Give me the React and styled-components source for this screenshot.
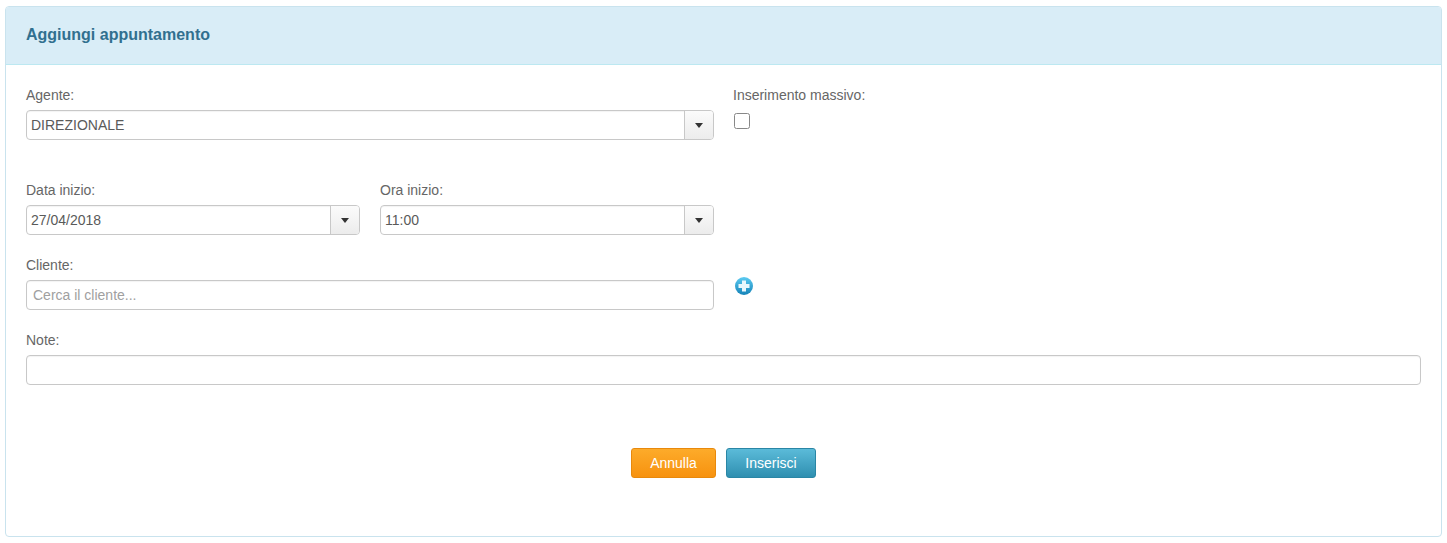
import React from "react";
import styled, { createGlobalStyle } from "styled-components";

const Global = createGlobalStyle`
  html, body { margin: 0; padding: 0; background: #fff; }
  body { font-family: "Liberation Sans", Arial, sans-serif; font-size: 14px; color: #555; }
  * { box-sizing: border-box; }
`;

const Page = styled.div`
  padding: 6px 5px 6px 5px;
`;
const Panel = styled.section`
  width: 1437px;
  height: 531px;
  border: 1px solid #c9e3ee;
  border-radius: 4px;
  overflow: hidden;
  background: #fff;
`;
const Header = styled.header`
  height: 58px;
  padding: 0 20px 1px;
  display: flex;
  align-items: center;
  background: #d9edf7;
  border-bottom: 1px solid #bce8f1;
`;
const Title = styled.h3`
  margin: 0;
  font-size: 16px;
  font-weight: 700;
  color: #31708f;
`;
const Body = styled.div`
  padding: 21px 20px 0;
  display: flex;
  flex-direction: column;
`;
const TopRow = styled.div`
  display: grid;
  grid-template-columns: 688px 1fr;
  column-gap: 19px;
  margin-bottom: 41px;
`;
const Row = styled.div`
  display: grid;
  grid-template-columns: 688px 1fr;
  column-gap: 19px;
  margin-bottom: 21px;
`;
const Split = styled.div`
  display: grid;
  grid-template-columns: 334px 334px;
  column-gap: 20px;
`;
const Field = styled.div`
  display: flex;
  flex-direction: column;
`;
const Label = styled.label`
  height: 24px;
  padding-top: 2px;
  line-height: 15px;
  font-size: 14px;
  color: #666;
`;
const Box = styled.div`
  height: 30px;
  display: flex;
  border: 1px solid #c8c8c8;
  border-radius: 4px;
  background: #fff;
  box-shadow: inset 0 1px 1px rgba(0, 0, 0, 0.05);
  overflow: hidden;
`;
const Value = styled.div`
  flex: 1;
  padding: 0 4px;
  line-height: 29px;
  font-size: 14px;
  color: #5a5a5a;
`;
const Placeholder = styled(Value)`
  padding: 0 6px;
  color: #a0a0a0;
`;
const Caret = styled.div`
  width: 29px;
  display: flex;
  align-items: center;
  justify-content: center;
  border-left: 1px solid #c8c8c8;
  background: linear-gradient(#fbfbfb, #ececec);
  &::after {
    content: "";
    border-left: 4.5px solid transparent;
    border-right: 4.5px solid transparent;
    border-top: 5px solid #333;
  }
`;
const Check = styled.div`
  width: 16px;
  height: 16px;
  margin: 3px 0 0 1px;
  border: 1px solid #888;
  border-radius: 2.5px;
  background: #fff;
`;
const AddCell = styled.div`
  padding: 20px 0 0 1px;
`;
const Actions = styled.div`
  display: flex;
  justify-content: center;
  gap: 10px;
  margin-top: 63px;
`;
const Button = styled.button`
  height: 30px;
  width: ${(p) => p.$w}px;
  padding: 0;
  border: 1px solid ${(p) => p.$border};
  border-radius: 3px;
  background: linear-gradient(${(p) => p.$from}, ${(p) => p.$to});
  color: #fff;
  font: 14px "Liberation Sans", Arial, sans-serif;
`;

const PlusIcon = () => (
  <svg width="20" height="20" viewBox="0 0 20 20" aria-hidden="true">
    <defs>
      <linearGradient id="plusFill" x1="0" y1="0" x2="0" y2="1">
        <stop offset="0" stopColor="#5ccbf2" />
        <stop offset="1" stopColor="#1583b8" />
      </linearGradient>
    </defs>
    <circle cx="10" cy="10" r="9" fill="url(#plusFill)" />
    <path d="M8 4.500h4V8h3.500v4H12v3.500H8V12H4.500V8H8z" fill="#eaf7fc" />
  </svg>
);

export default function App() {
  return (
    <Page>
      <Global />
      <Panel>
        <Header>
          <Title>Aggiungi appuntamento</Title>
        </Header>
        <Body>
          <TopRow>
            <Field>
              <Label>Agente:</Label>
              <Box>
                <Value>DIREZIONALE</Value>
                <Caret />
              </Box>
            </Field>
            <Field>
              <Label>Inserimento massivo:</Label>
              <Check />
            </Field>
          </TopRow>
          <Row>
            <Split>
              <Field>
                <Label>Data inizio:</Label>
                <Box>
                  <Value>27/04/2018</Value>
                  <Caret />
                </Box>
              </Field>
              <Field>
                <Label>Ora inizio:</Label>
                <Box>
                  <Value>11:00</Value>
                  <Caret />
                </Box>
              </Field>
            </Split>
          </Row>
          <Row>
            <Field>
              <Label>Cliente:</Label>
              <Box>
                <Placeholder>Cerca il cliente...</Placeholder>
              </Box>
            </Field>
            <AddCell>
              <PlusIcon />
            </AddCell>
          </Row>
          <Field>
            <Label>Note:</Label>
            <Box>
              <Value />
            </Box>
          </Field>
          <Actions>
            <Button $w={85} $border="#e8890c" $from="#fdab2a" $to="#f7920f">Annulla</Button>
            <Button $w={90} $border="#2a86a5" $from="#5bbbd9" $to="#2f8fb0">Inserisci</Button>
          </Actions>
        </Body>
      </Panel>
    </Page>
  );
}
